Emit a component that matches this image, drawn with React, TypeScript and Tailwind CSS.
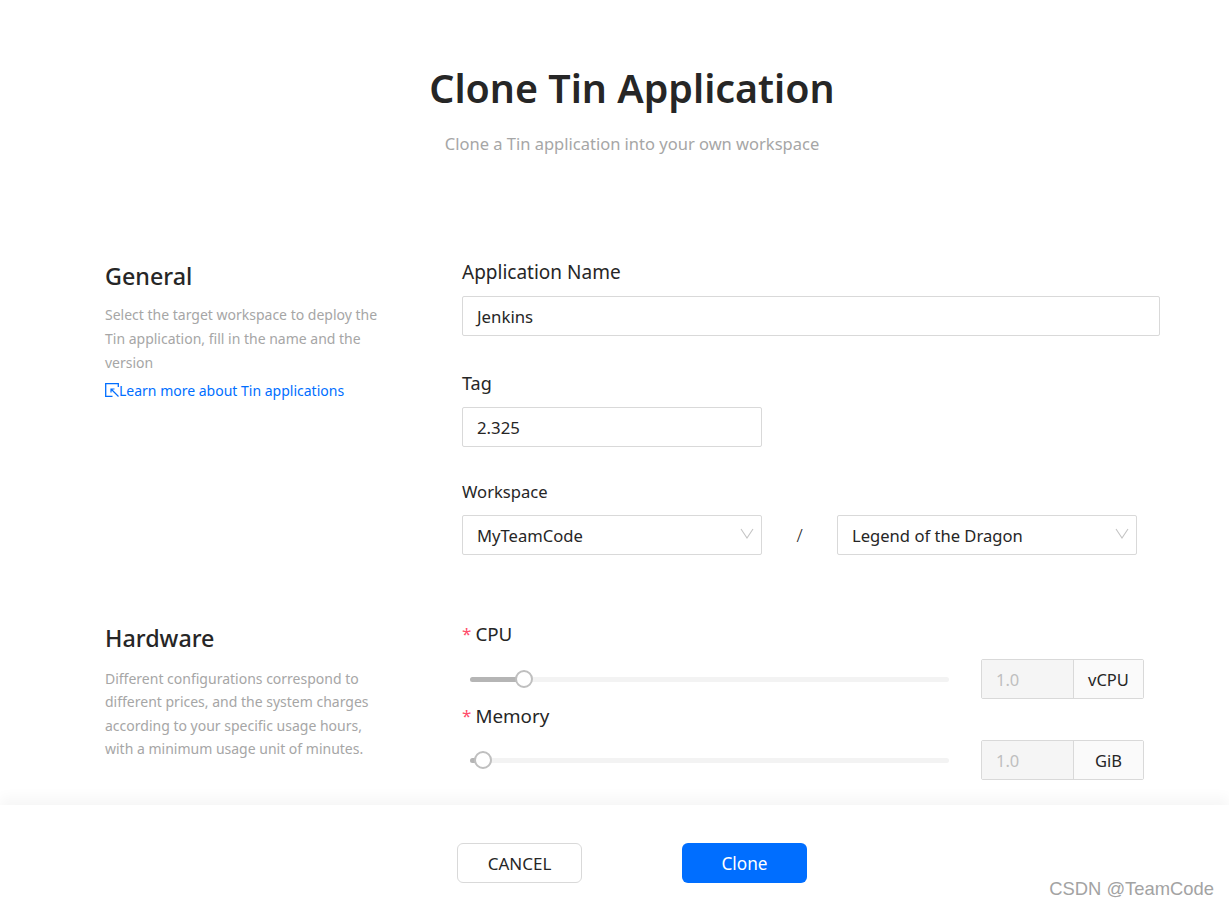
import React from "react";

function Chevron() {
  return (
    <svg width="14" height="11" viewBox="0 0 14 11" fill="none" className="shrink-0">
      <path d="M1 1 L7 10 L13 1" stroke="#c4c4c4" strokeWidth="1.1" />
    </svg>
  );
}

function Select({ value }: { value: string }) {
  return (
    <div className="flex h-10 w-[300px] items-center justify-between rounded-[2px] border border-[#d9d9d9] pl-[14px] pr-[7px] text-[16.6px] text-[#262626]">
      <span className="pt-[2px]">{value}</span>
      <div className="-mt-[3px]"><Chevron /></div>
    </div>
  );
}

function Slider({ fill, thumb }: { fill: string; thumb: string }) {
  return (
    <div className="relative ml-2 h-[5px] w-[479px] rounded-full bg-[#f3f3f3]">
      <div className={`absolute left-0 top-0 h-[5px] rounded-full bg-[#b5b5b5] ${fill}`} />
      <div className={`absolute top-[-7px] h-[18px] w-[18px] rounded-full border-2 border-[#bfbfbf] bg-white ${thumb}`} />
    </div>
  );
}

function UnitInput({ unit }: { unit: string }) {
  return (
    <div className="flex h-10 w-[163px] rounded-[2px] border border-[#d9d9d9] pt-0 text-[16.5px]">
      <div className="flex w-[92px] items-center border-r border-[#d9d9d9] bg-[#f5f5f5] pl-[14px] pt-[2px] text-[#bfbfbf]">1.0</div>
      <div className="flex flex-1 items-center justify-center bg-[#fafafa] pt-[2px] text-[#262626]">{unit}</div>
    </div>
  );
}

function Required({ label }: { label: string }) {
  return (
    <div className="flex h-[28px] items-center text-[18.8px] leading-[28px] text-[#262626]">
      <span className="mr-[5px] text-[17px] text-[#ff4d6a]">*</span>
      <span className="-ml-[1px]">{label}</span>
    </div>
  );
}

export default function App() {
  return (
    <div className="relative flex h-[906px] w-[1229px] flex-col overflow-hidden bg-white font-['Noto_Sans','Open_Sans',sans-serif] text-[#262626]">
      <main className="flex-1 overflow-hidden">
        <header className="flex w-[1264px] flex-col items-center pt-[59px]">
          <h1 className="text-[39.4px] font-semibold leading-[58px] text-[#262626]">Clone Tin Application</h1>
          <p className="mt-[13px] text-[16.5px] leading-[28px] text-[#a6a6a6]">Clone a Tin application into your own workspace</p>
        </header>

        <section className="mt-[100px] flex pl-[105px]">
          <div className="w-[357px]">
            <h2 className="text-[23.3px] font-medium leading-[36px]">General</h2>
            <p className="mt-[9px] w-[290px] text-[14px] leading-[24px] text-[#a6a6a6]">
              Select the target workspace to deploy the Tin application, fill in the name and the version
            </p>
            <a className="mt-[2px] flex items-center text-[14px] leading-[28px] text-[#006eff]">
              <svg width="14" height="14" viewBox="0 0 14 14" fill="none" className="-mt-[2px] shrink-0">
                <path d="M13.3 4V0.7H0.7v12.6h6.8" stroke="#006eff" strokeWidth="1.3" />
                <path d="M6 9.5V6h3.5M6 6l7.5 7.5" stroke="#006eff" strokeWidth="1.2" />
              </svg>
              <span>Learn more about Tin applications</span>
            </a>
          </div>
          <div className="flex-1">
            <label className="block text-[19px] leading-[28px]">Application Name</label>
            <div className="mt-[10px] flex h-10 w-[698px] items-center rounded-[2px] border border-[#d9d9d9] pl-[14px] pt-[2px] text-[16.8px]">Jenkins</div>
            <label className="mt-[33px] block text-[18px] leading-[28px]">Tag</label>
            <div className="mt-[10px] flex h-10 w-[300px] items-center rounded-[2px] border border-[#d9d9d9] pl-[14px] pt-[2px] text-[16.8px]">2.325</div>
            <label className="mt-[31px] block text-[16.6px] leading-[28px]">Workspace</label>
            <div className="mt-[9px] flex items-center">
              <Select value="MyTeamCode" />
              <span className="w-[75px] text-center text-[18px] font-light">/</span>
              <Select value="Legend of the Dragon" />
            </div>
          </div>
        </section>

        <section className="mt-[69px] flex pl-[105px]">
          <div className="-mt-[4px] w-[357px]">
            <h2 className="text-[23.3px] font-medium leading-[36px]">Hardware</h2>
            <p className="mt-[11px] w-[280px] text-[14px] leading-[23.4px] text-[#a6a6a6]">
              Different configurations correspond to different prices, and the system charges according to your specific usage hours, with a minimum usage unit of minutes.
            </p>
          </div>
          <div className="-mt-[4px] flex-1">
            <Required label="CPU" />
            <div className="mt-[11px] flex items-center">
              <Slider fill="w-[50px]" thumb="left-[45px]" />
              <div className="ml-[32px]"><UnitInput unit="vCPU" /></div>
            </div>
            <div className="mt-[3px]"><Required label="Memory" /></div>
            <div className="mt-[10px] flex items-center">
              <Slider fill="w-[10px]" thumb="left-[4px]" />
              <div className="ml-[32px]"><UnitInput unit="GiB" /></div>
            </div>
          </div>
        </section>
      </main>

      <footer className="flex h-[101px] shrink-0 justify-center gap-[100px] bg-white pl-[35px] pt-[38px] shadow-[0_-8px_12px_rgba(0,0,0,0.035)]">
        <button className="h-10 w-[125px] rounded-[6px] border border-[#d9d9d9] bg-white pt-[1px] text-[17px] text-[#262626]">CANCEL</button>
        <button className="h-10 w-[125px] rounded-[6px] bg-[#006eff] pt-[1px] text-[17.2px] text-white">Clone</button>
      </footer>

      <div className="absolute bottom-[4px] right-[15px] font-['Liberation_Sans',sans-serif] text-[18.4px] leading-[26px] text-[#a3a3a3]">CSDN @TeamCode</div>
    </div>
  );
}
